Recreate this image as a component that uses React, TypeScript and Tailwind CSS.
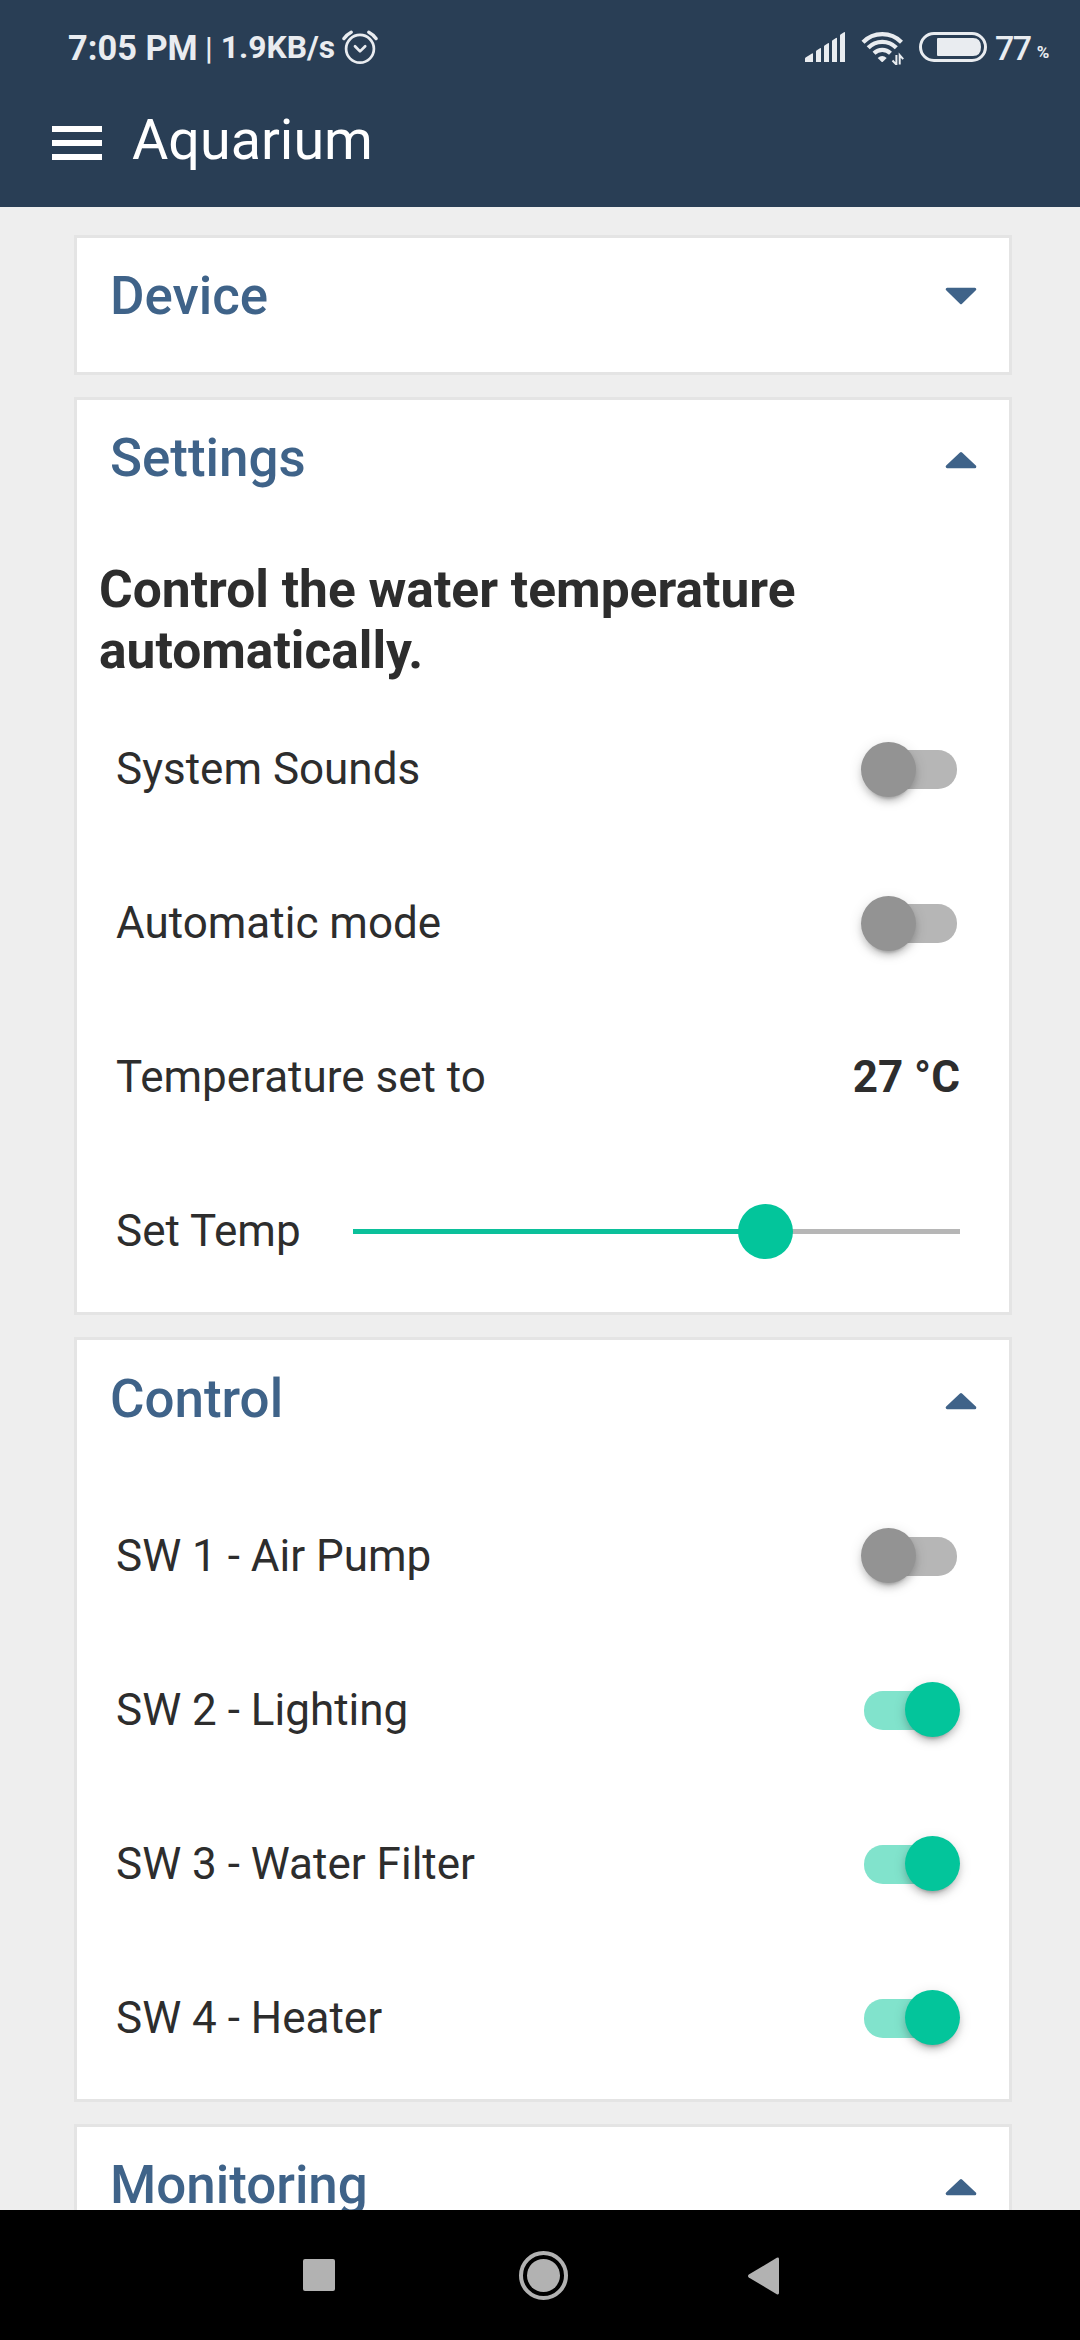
import type { ReactNode } from "react";

function AlarmIcon() {
  return (
    <svg width="36" height="36" viewBox="0 0 36 36" fill="none" stroke="currentColor" strokeLinecap="round" strokeLinejoin="round">
      <circle cx="18" cy="18.8" r="13.9" strokeWidth="2.7" />
      <path d="M13 16.2l5 5.2 5.2-5.2" strokeWidth="2.7" />
      <path d="M2 8.6C4 5.8 6.4 3.6 9.2 2.2M34 8.6C32 5.8 29.6 3.6 26.8 2.2" strokeWidth="3.4" />
    </svg>
  );
}

function SignalIcon() {
  return (
    <svg width="40" height="30" viewBox="0 0 40 30" fill="currentColor">
      <path d="M0 30v-3.5Q0 26 .6 25.6L7 21.5Q8 21 8 22v8z" />
      <path d="M11 30V19.6q0-.6.5-1L15 16.2q1-.7 1 .4V30z" />
      <path d="M19 30V14.6q0-.6.5-1L23 11.2q1-.7 1 .4V30z" />
      <path d="M27 30V9.3q0-.6.5-1L31 5.900q1-.7 1 .4V30z" />
      <path d="M35 30V3.600q0-.6.5-1L39 .3q1-.7 1 .4V30z" />
    </svg>
  );
}

function WifiIcon() {
  return (
    <svg width="44" height="34" viewBox="0 0 44 34" fill="none">
      <g stroke="currentColor" strokeWidth="4.2">
        <path d="M2 11.2A27 27 0 0 1 40.5 11.2" />
        <path d="M7.2 16.8A19.5 19.5 0 0 1 35.3 16.8" />
        <path d="M13 22.2A12 12 0 0 1 29.5 22.2" />
      </g>
      <path d="M16.7 27Q21.2 23 25.7 27L21.9 30.8Q21.2 31.3 20.5 30.8z" fill="currentColor" />
      <path d="M35.4 24v9.6L31.5 29.5M38.7 33.6V24.2L42.2 28.2" stroke="currentColor" strokeWidth="2" />
    </svg>
  );
}

function BatteryIcon() {
  return (
    <svg width="68" height="30" viewBox="0 0 68 30">
      <rect x="1.5" y="1.5" width="65" height="27" rx="13.5" fill="none" stroke="currentColor" strokeWidth="3" />
      <path d="M19 6h35q8 0 8 9t-8 9H19q-1 0-1-1V7q0-1 1-1z" fill="currentColor" />
    </svg>
  );
}

function StatusBar() {
  return (
    <div className="flex h-24 items-center pl-[68px] text-[#e9ecf0]">
      <span className="w-[130px] text-[34.4px] leading-none font-bold whitespace-nowrap">7:05 PM</span>
      <span className="ml-[7px] text-[31px] leading-none font-medium">|</span>
      <span className="ml-[8px] w-[115px] text-[31.8px] leading-none font-bold whitespace-nowrap">1.9KB/s</span>
      <span className="mb-[1px] ml-[6px]">
        <AlarmIcon />
      </span>
      <div className="ml-auto flex w-[275px] items-center">
        <span className="mb-[3px]">
          <SignalIcon />
        </span>
        <span className="ml-[16px]">
          <WifiIcon />
        </span>
        <span className="mb-[2px] ml-[14px]">
          <BatteryIcon />
        </span>
        <span className="ml-[8px] text-[34px] leading-none font-medium tracking-[-1.5px]">77</span>
        <span className="mt-[8px] ml-[6px] text-[17px] leading-none font-bold">%</span>
      </div>
    </div>
  );
}

function AppBar() {
  return (
    <div className="flex h-[88px] items-center pl-[52px]">
      <button className="flex w-[50px] flex-col gap-[8px] pt-[6px]" aria-label="Menu">
        <span className="h-[6px] w-full bg-white" />
        <span className="h-[6px] w-full bg-white" />
        <span className="h-[6px] w-full bg-white" />
      </button>
      <h1 className="mt-[2px] ml-[30px] text-[55.7px] leading-none text-white">Aquarium</h1>
    </div>
  );
}

function Caret({ open }: { open: boolean }) {
  return (
    <svg width="32" height="24" viewBox="0 0 32 24" fill="#3f6389" stroke="#3f6389" strokeWidth="3" strokeLinejoin="round">
      {open ? <path d="M2.2 20.7h27.6L16 7.5z" /> : <path d="M2.2 5.2h27.6L16 18.7z" />}
    </svg>
  );
}

function Card({
  title,
  open,
  headerClass = "",
  children,
}: {
  title: string;
  open: boolean;
  headerClass?: string;
  children?: ReactNode;
}) {
  return (
    <section className="shrink-0 border-[3px] border-[#e4e4e4] bg-white">
      <header className={`flex h-[116px] items-center justify-between pr-[32px] pl-[33px] ${headerClass}`}>
        <h2 className="text-[52.9px] leading-none font-medium text-[#3f6389]">{title}</h2>
        <Caret open={open} />
      </header>
      {children}
    </section>
  );
}

function Row({ label, children }: { label: string; children: ReactNode }) {
  return (
    <div className="flex h-[154px] items-center justify-between pr-[49px] pl-[39px]">
      <span className="text-[44px] leading-none">{label}</span>
      {children}
    </div>
  );
}

const THUMB_SHADOW =
  "shadow-[0_8px_3px_-6px_rgba(0,0,0,0.2),0_5px_6px_rgba(0,0,0,0.14),0_3px_14px_rgba(0,0,0,0.12)]";

function Toggle({ on, box, track }: { on?: boolean; box: string; track: string }) {
  return (
    <button role="switch" aria-checked={!!on} className={`relative w-[99px] ${box}`}>
      <span className={`absolute left-[3px] h-[39px] w-[93px] rounded-[19px] ${track} ${on ? "bg-[#81e3cc]" : "bg-[#b6b6b6]"}`} />
      <span
        className={`absolute top-0 size-[55px] rounded-full ${THUMB_SHADOW} ${on ? "left-[44px] bg-[#03c59b]" : "left-0 bg-[#939393]"}`}
      />
    </button>
  );
}

function Slider({ value }: { value: number }) {
  return (
    <div className="relative h-[54px] w-[607px]">
      <div className="absolute top-[25px] h-[5px] w-full bg-[#b6b6b6]" />
      <div className="absolute top-[25px] h-[5px] bg-[#0bc09a]" style={{ width: `${value}%` }} />
      <div
        className="absolute top-0 -ml-[27.5px] size-[55px] rounded-full bg-[#03c59b]"
        style={{ left: `${value}%` }}
      />
    </div>
  );
}

const SWITCHES = [
  { label: "SW 1 - Air Pump", on: false },
  { label: "SW 2 - Lighting", on: true },
  { label: "SW 3 - Water Filter", on: true },
  { label: "SW 4 - Heater", on: true },
];

function NavBar() {
  return (
    <nav className="flex h-[130px] shrink-0 items-center bg-black pl-[303px]">
      <span className="size-[32px] rounded-[2px] bg-[#b2b2b2]" />
      <span className="mt-[1px] ml-[184px] flex size-[49px] items-center justify-center rounded-full border-4 border-[#b2b2b2]">
        <span className="size-[33px] rounded-full bg-[#b2b2b2]" />
      </span>
      <svg className="mt-[1px] ml-[180px]" width="32" height="38" viewBox="0 0 32 38" fill="#b2b2b2">
        <path d="M.8 17.6L28.8.7Q31 0 31 2v34q0 2-2.2 1.3L.8 20.4Q-.8 19 .8 17.6z" />
      </svg>
    </nav>
  );
}

export default function App() {
  return (
    <div className="flex h-[2340px] w-[1080px] flex-col overflow-hidden bg-[#eeeeee] font-[Roboto,sans-serif] text-[#2d2d2d]">
      <div className="h-[207px] shrink-0 bg-[#293e55]">
        <StatusBar />
        <AppBar />
      </div>
      <main className="flex min-h-0 flex-1 flex-col gap-[22px] overflow-hidden pt-[28px] pr-[68px] pl-[74px]">
        <Card title="Device" open={false}>
          <div className="h-[18px]" />
        </Card>
        <Card title="Settings" open>
          <p className="mt-[43px] mb-[11px] pr-[120px] pl-[22px] text-[51.5px] leading-[61px] font-bold">
            Control the water temperature automatically.
          </p>
          <Row label="System Sounds">
            <Toggle box="h-[54px]" track="top-[8px]" />
          </Row>
          <Row label="Automatic mode">
            <Toggle box="h-[54px]" track="top-[8px]" />
          </Row>
          <Row label="Temperature set to">
            <span className="text-[44px] leading-none font-bold">27 °C</span>
          </Row>
          <Row label="Set Temp">
            <Slider value={68} />
          </Row>
          <div className="h-[4px]" />
        </Card>
        <Card title="Control" open headerClass="pt-[2px]">
          <div className="pt-[23px] pb-[4px]">
            {SWITCHES.map((s) => (
              <Row key={s.label} label={s.label}>
                <Toggle on={s.on} box="h-[56px]" track="top-[9px]" />
              </Row>
            ))}
          </div>
        </Card>
        <Card title="Monitoring" open />
      </main>
      <NavBar />
    </div>
  );
}
